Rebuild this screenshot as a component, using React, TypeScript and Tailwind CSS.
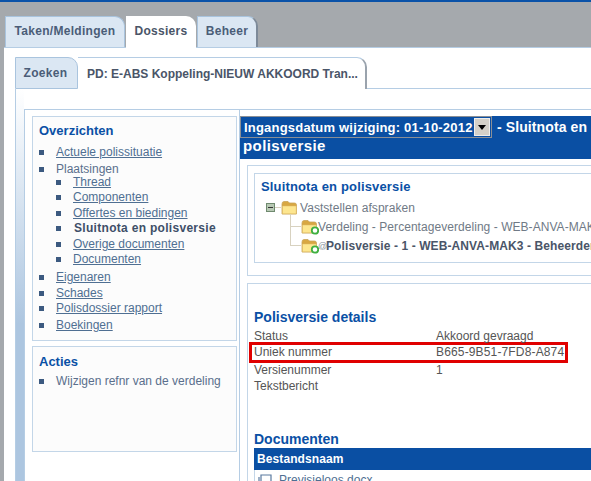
import React from "react";

const font = { fontFamily: '"Liberation Sans", Arial, sans-serif' };

function Folder({ badge }: { badge?: boolean }) {
  return (
    <svg width="18" height="17" viewBox="0 0 18 17" className="shrink-0">
      <path d="M1 5 Q1 2.5 3 2.5 H7 L8.5 4 H13.5 Q15.5 4 15.5 6 V15 H1 Z" fill="#d8a742" stroke="#c9a45a" strokeWidth="0.8" />
      <path d="M1.5 7 H15.2 V14.8 H1.5 Z" fill="#fde68f" stroke="#dcbb68" strokeWidth="0.5" />
      {badge && <circle cx="14" cy="12.5" r="3.2" fill="#fff" stroke="#3fb040" strokeWidth="1.8" />}
    </svg>
  );
}

function Bullet({ bold, plain, children, sub, className = "" }: { bold?: boolean; plain?: boolean; sub?: boolean; className?: string; children: React.ReactNode }) {
  return (
    <li className={`flex items-center h-[16px] ${sub ? "pl-[17px]" : ""} ${className}`}>
      <span className="bg-[#3c5a80] shrink-0 w-[5px] h-[5px] mr-[12px]" />
      <span className={`${bold ? "font-bold text-[#3e4f68] tracking-[0.3px] ml-[1px]" : plain ? "text-[#5a6f8c]" : "text-[#4f6f92] underline"} whitespace-nowrap`}>{children}</span>
    </li>
  );
}

export default function App() {
  return (
    <div style={font} className="w-[591px] h-[481px] overflow-hidden bg-[#a5a9ad] border-t-2 border-[#0a52a8] flex flex-col text-[12px] leading-[16px]">
      {/* main tabs */}
      <div className="h-[45px] shrink-0 flex items-end pl-[5px] gap-[1px] font-bold text-[12px] tracking-[0.3px] text-[#4a5d78]">
        <div className="w-[120px] h-[31px] pb-[2px] bg-[#dbe7f3] border border-[#a9c4de] border-b-0 rounded-tr-[10px] flex items-center justify-center">Taken/Meldingen</div>
        <div className="w-[70px] h-[32px] pb-[2px] bg-white rounded-tr-[10px] flex items-center justify-center -mb-[1px] z-10 text-[#4a5568]">Dossiers</div>
        <div className="w-[61px] h-[31px] pb-[2px] bg-[#dbe7f3] border border-[#a9c4de] border-b-0 border-r-2 border-r-[#7d8a99] rounded-tr-[10px] flex items-center justify-center">Beheer</div>
      </div>

      {/* panel */}
      <div className="flex-1 ml-[4px] bg-white border-t border-[#b5cde4] pl-[11px] pt-[9px] flex flex-col min-h-0">
        {/* sub tabs */}
        <div className="h-[32px] shrink-0 flex items-stretch font-bold text-[12px]">
          <div className="w-[63px] pr-[2px] bg-[#dbe7f3] border border-[#a9c4de] rounded-tr-[10px] flex items-center justify-center text-[#4a5d78] tracking-[0.3px]">Zoeken</div>
          <div className="w-[289px] bg-white border-t border-[#b5cde4] border-r-2 border-r-[#9aa3ad] rounded-tr-[10px] flex items-center pl-[9px] text-[#4a5568] whitespace-nowrap">PD: E-ABS Koppeling-NIEUW AKKOORD Tran...</div>
          <div className="flex-1 border-b border-[#b5cde4]" />
        </div>

        <div className="flex-1 flex min-h-0 border-l border-[#b5cde4]">
          <div className="w-[8px] shrink-0 bg-gradient-to-b from-white to-[#adc6e0] to-60%" />
          <div className="flex-1 flex flex-col pt-[20px] min-w-0">
            <div className="flex-1 flex border-t border-l border-[#b5cde4] min-h-0">
              {/* sidebar */}
              <div className="w-[214px] shrink-0 pl-[7px] pt-[6px] flex flex-col gap-[5px]">
                <div className="w-[205px] h-[225px] border border-[#c3d6e8] bg-[#fcfcfc] pl-[6px] pt-[6px]">
                  <h2 className="text-[13px] font-bold text-[#0a50a5] leading-[16px] mb-[5px]">Overzichten</h2>
                  <ul>
                    <Bullet>Actuele polissituatie</Bullet>
                    <Bullet plain className="mt-[1px]">Plaatsingen</Bullet>
                    <Bullet sub className="-mt-[3px]">Thread</Bullet>
                    <Bullet sub className="-mt-[1px]">Componenten</Bullet>
                    <Bullet sub>Offertes en biedingen</Bullet>
                    <Bullet sub bold className="-mt-[1px]">Sluitnota en polisversie</Bullet>
                    <Bullet sub>Overige documenten</Bullet>
                    <Bullet sub className="-mt-[1px]">Documenten</Bullet>
                    <Bullet className="mt-[2px]">Eigenaren</Bullet>
                    <Bullet>Schades</Bullet>
                    <Bullet className="-mt-[1px]">Polisdossier rapport</Bullet>
                    <Bullet className="mt-[1px]">Boekingen</Bullet>
                  </ul>
                </div>
                <div className="w-[205px] h-[106px] border border-[#c3d6e8] bg-[#fcfcfc] pl-[6px] pt-[7px]">
                  <h2 className="text-[13px] font-bold text-[#0a50a5] leading-[16px] mb-[3px]">Acties</h2>
                  <ul>
                    <Bullet plain>Wijzigen refnr van de verdeling</Bullet>
                  </ul>
                </div>
              </div>

              {/* content */}
              <div className="flex-1 min-w-0 border-l border-[#b5cde4] overflow-hidden pt-[6px]">
                <div className="h-[43px] bg-[#0a4fa3] text-white font-bold text-[14px] leading-[21px] whitespace-nowrap overflow-hidden">
                  <div className="flex h-[22px] items-center">
                    <div className="w-[252px] h-[22px] shrink-0 border border-[#8a8f96] flex items-center pl-[3px] text-[13px] tracking-[0.2px] relative overflow-hidden">
                      <span>Ingangsdatum wijziging: 01-10-2012</span>
                      <span className="absolute right-[1px] top-[1px] w-[16px] h-[18px] bg-[#d4d0c8] border border-[#eee] flex items-center justify-center">
                        <svg width="8" height="5" viewBox="0 0 8 5"><path d="M0 0H8L4 5Z" fill="#000" /></svg>
                      </span>
                    </div>
                    <span className="ml-[5px] tracking-[0.1px]">- Sluitnota en polisversie</span>
                  </div>
                  <div className="pl-[3px] -mt-[3px] text-[15px] tracking-[0.4px]">polisversie</div>
                </div>

                <div className="ml-[7px] mt-[6px] h-[111px] border-t border-l border-b border-[#c3d6e8] pl-[6px] pt-[7px]">
                  <div className="h-[90px] border-t border-l border-b border-[#c3d6e8] pl-[6px] pt-[5px]">
                    <h2 className="text-[13px] font-bold text-[#0a50a5] leading-[16px] tracking-[0.15px]">Sluitnota en polisversie</h2>
                    <div className="text-[12px] text-[#707a86] whitespace-nowrap overflow-hidden tracking-[0.05px]">
                      <div className="flex items-center h-[19px] mt-[3px] pl-[5px]">
                        <span className="w-[9px] h-[9px] bg-[#b8c9b4] border border-[#6f8a6f] flex items-center justify-center shrink-0"><span className="w-[5px] h-[1px] bg-[#333]" /></span>
                        <span className="w-[6px] h-[1px] bg-[#d8d2c0] shrink-0" />
                        <Folder />
                        <span className="ml-[1px]">Vaststellen afspraken</span>
                      </div>
                      <div className="relative">
                        <span className="absolute left-[29px] -top-[3px] w-[1px] h-[32px] bg-[#d8d2c0]" />
                        <div className="flex items-center h-[19px] pl-[29px]">
                          <span className="w-[11px] h-[1px] bg-[#d8d2c0] shrink-0" />
                          <Folder badge />
                          <span className="-ml-[1px]">Verdeling - Percentageverdeling - WEB-ANVA-MAK3 - Beheerder</span>
                        </div>
                        <div className="flex items-center h-[19px] pl-[29px]">
                          <span className="w-[11px] h-[1px] bg-[#d8d2c0] shrink-0" />
                          <Folder badge />
                          <span className="text-[#8a94a0] text-[9px] w-[8px] tracking-normal -ml-[1px]">@</span>
                          <span className="font-bold text-[#4a5568] tracking-[0.1px]">Polisversie - 1 - WEB-ANVA-MAK3 - Beheerder</span>
                        </div>
                      </div>
                    </div>
                  </div>
                </div>

                <div className="ml-[7px] mt-[7px] border-t border-l border-[#c3d6e8] pl-[6px] pt-[25px] h-[300px]">
                  <h2 className="text-[14px] font-bold text-[#0a50a5] leading-[17px] mb-[2px]">Polisversie details</h2>
                  <div className="text-[12px] text-[#555]">
                    <div className="flex h-[16px] items-center"><span className="w-[182px]">Status</span><span>Akkoord gevraagd</span></div>
                    <div className="-ml-[5px] -mt-[2px] w-[319px] h-[21px] border-[3px] border-[#e00000] flex items-center pl-[2px] pb-[1px]"><span className="w-[182px]">Uniek nummer</span><span className="tracking-[0.15px]">B665-9B51-7FD8-A874</span></div>
                    <div className="flex h-[16px] -mt-[1px] items-center"><span className="w-[182px]">Versienummer</span><span>1</span></div>
                    <div className="flex h-[16px] items-center"><span>Tekstbericht</span></div>
                  </div>
                  <h2 className="mt-[37px] text-[14px] font-bold text-[#0a50a5] leading-[17px]">Documenten</h2>
                  <div className="h-[22px] bg-[#0a4fa3] text-white font-bold text-[12px] flex items-center pl-[3px] tracking-[0.1px]">Bestandsnaam</div>
                  <div className="flex items-center h-[20px] pl-[3px] border-l border-[#c3d6e8] text-[#4f6f92] text-[12px]">
                    <svg width="14" height="13" viewBox="0 0 14 13" className="mr-[7px] shrink-0"><path d="M3 1H13V10H3ZM1 3V12H11" fill="none" stroke="#5a7aa0" strokeWidth="1.2" /></svg>
                    <span>Previsieloos docx</span>
                  </div>
                </div>
              </div>
            </div>
          </div>
        </div>
      </div>
    </div>
  );
}
